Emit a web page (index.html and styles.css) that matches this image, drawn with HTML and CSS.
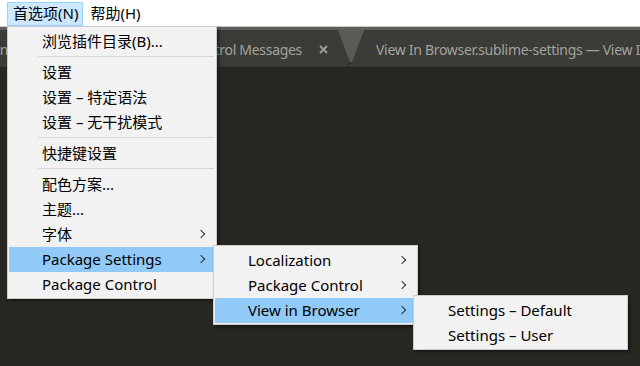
FILE: index.html
```html
<!DOCTYPE html>
<html lang="zh-CN">
<head>
    <meta charset="UTF-8">
    <title>Sublime Text - 首选项</title>
    <link rel="stylesheet" href="styles.css">
</head>
<body>
    <!-- Window menu bar -->
    <div class="menubar">
        <span class="menubar-item open">首选项(N)</span>
        <span class="menubar-item">帮助(H)</span>
    </div>

    <!-- Editor behind the menus -->
    <div class="window">
        <div class="tabbar">
            <div class="tab tab-stub"><span class="tab-label">n</span></div>
            <div class="tab tab-prev">
                <span class="tab-label">Package Control Messages</span>
                <svg class="tab-close" width="9" height="9" viewBox="0 0 9 9">
                    <path d="M1 1 L8 8 M8 1 L1 8" stroke="#9c9c96" stroke-width="2" fill="none"/>
                </svg>
            </div>
            <svg class="tab-notch" width="26" height="37" viewBox="0 0 26 37">
                <path d="M0 0 L26 0 L14 32 L12 32 Z" fill="#5b5b56"/>
                <path d="M12 32 L10 37" stroke="#2e2e2a" stroke-width="2"/>
            </svg>
            <div class="tab tab-current">
                <span class="tab-label">View In Browser.sublime-settings — View In Browser</span>
            </div>
        </div>
        <div class="editor"></div>
    </div>

    <!-- 首选项 menu -->
    <div class="menu menu-main">
        <div class="menu-item">浏览插件目录(B)...</div>
        <div class="menu-sep"></div>
        <div class="menu-item">设置</div>
        <div class="menu-item">设置 – 特定语法</div>
        <div class="menu-item">设置 – 无干扰模式</div>
        <div class="menu-sep"></div>
        <div class="menu-item">快捷键设置</div>
        <div class="menu-sep"></div>
        <div class="menu-item">配色方案...</div>
        <div class="menu-item">主题...</div>
        <div class="menu-item has-sub">字体</div>
        <div class="menu-item has-sub active">Package Settings</div>
        <div class="menu-item">Package Control</div>
    </div>

    <!-- Package Settings submenu -->
    <div class="menu menu-packages">
        <div class="menu-item has-sub">Localization</div>
        <div class="menu-item has-sub">Package Control</div>
        <div class="menu-item has-sub active">View in Browser</div>
    </div>

    <!-- View in Browser submenu -->
    <div class="menu menu-browser">
        <div class="menu-item">Settings – Default</div>
        <div class="menu-item">Settings – User</div>
    </div>
</body>
</html>
```

FILE: styles.css
```css
/* Base */
body {
    margin: 0;
    height: 366px;
    overflow: hidden;
    background-color: #272822;
    font-family: "Noto Sans", "Noto Sans CJK SC", sans-serif;
    font-size: 15px;
    color: #000;
    position: relative;
}

/* Menu bar */
.menubar {
    height: 26px;
    background-color: #fff;
    display: flex;
    align-items: flex-end;
    padding-left: 7px;
}
.menubar-item {
    height: 22px;
    line-height: 21px;
    padding: 0 5px 0 6px;
    border: 1px solid transparent;
}
.menubar-item.open {
    background-color: #cce8ff;
    border-color: #99d1ff;
    padding: 0 4px 0 5px;
}

/* Editor window */
.window {
    border-top: 1px solid #c9c9c6;
}
.tabbar {
    height: 37px;
    display: flex;
    align-items: stretch;
    background-color: #3b3b37;
    border-top: 3px solid #5e5e5a;
    border-bottom: 1px solid #22221e;
    overflow: hidden;
    white-space: nowrap;
    font-size: 14px;
    letter-spacing: -0.3px;
}
.tab {
    flex: none;
    display: flex;
    align-items: center;
    padding-top: 1px;
    color: #a3a39d;
}
.tab-stub {
    width: 8px;
    overflow: hidden;
    justify-content: flex-end;
}
.tab-prev {
    width: 330px;
    justify-content: flex-end;
    padding-right: 10px;
    box-sizing: border-box;
}
.tab-close {
    margin-left: 17px;
}
.tab-notch {
    flex: none;
}
.tab-current {
    padding-left: 12px;
}
.editor {
    height: 300px;
    background-color: #272822;
}

/* Dropdown menus */
.menu {
    position: absolute;
    box-sizing: border-box;
    background-color: #f2f2f2;
    border: 1px solid #cccccc;
    padding: 2px 1px 1px;
    box-shadow: 2px 2px 3px rgba(0, 0, 0, 0.45);
}
.menu-main {
    left: 7px;
    top: 26px;
    width: 210px;
}
.menu-packages {
    left: 213px;
    top: 245px;
    width: 205px;
}
.menu-browser {
    left: 413px;
    top: 295px;
    width: 215px;
}
.menu-item {
    height: 25px;
    line-height: 25px;
    padding-left: 33px;
    position: relative;
    white-space: nowrap;
}
.menu-item.active {
    background-color: #91c9f7;
}
.menu-item.has-sub::after {
    content: "";
    position: absolute;
    right: 11px;
    top: 9px;
    width: 5px;
    height: 5px;
    border-top: 1px solid #333;
    border-right: 1px solid #333;
    transform: rotate(45deg);
}
.menu-sep {
    height: 1px;
    background-color: #d7d7d7;
    margin: 2px 1px 3px 29px;
}
```
